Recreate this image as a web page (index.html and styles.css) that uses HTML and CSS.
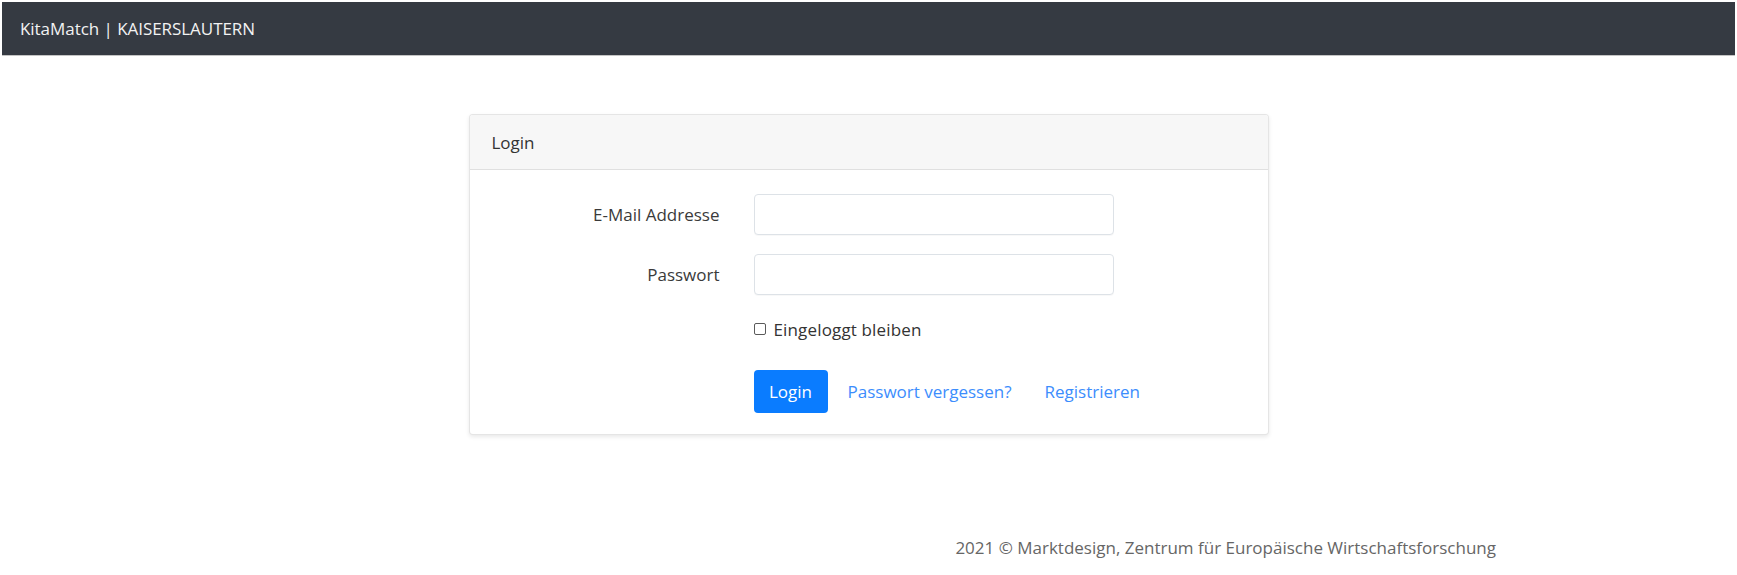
FILE: index.html
```html
<!DOCTYPE html>
<html lang="de">
<head>
<meta charset="utf-8">
<title>KitaMatch | KAISERSLAUTERN</title>
<link rel="stylesheet" href="styles.css">
</head>
<body>
  <nav class="navbar">
    <span class="brand">KitaMatch | KAISERSLAUTERN</span>
  </nav>
  <main class="main">
    <section class="card">
      <div class="card-header">Login</div>
      <form class="card-body">
        <div class="form-row row-email">
          <label class="form-label" for="email">E-Mail Addresse</label>
          <input class="form-input" id="email" type="email">
        </div>
        <div class="form-row row-password">
          <label class="form-label" for="password">Passwort</label>
          <input class="form-input" id="password" type="password">
        </div>
        <div class="form-row row-remember">
          <span></span>
          <label class="check"><input class="check-box" type="checkbox"> Eingeloggt bleiben</label>
        </div>
        <div class="form-row row-actions">
          <span></span>
          <div class="actions">
            <button class="btn-primary" type="button">Login</button>
            <a class="link link-forgot" href="#">Passwort vergessen?</a>
            <a class="link link-register" href="#">Registrieren</a>
          </div>
        </div>
      </form>
    </section>
  </main>
  <footer class="footer">
    <span class="footer-text">2021 © Marktdesign, Zentrum für Europäische Wirtschaftsforschung</span>
  </footer>
</body>
</html>
```
FILE: styles.css
```css
html, body {
  background: #ffffff;
}
body {
  margin: 0;
  padding: 2px 2px 0 2px;
  font-family: "Open Sans", "Noto Sans", "Liberation Sans", sans-serif;
  font-size: 17px;
  color: #212529;
}
.navbar {
  height: 53px;
  background: #353a42;
  display: flex;
  align-items: center;
  padding-left: 18px;
  box-shadow: 0 1px 0 #c4c4c4;
}
.brand {
  color: #f2f2f2;
  font-size: 17px;
  letter-spacing: -0.05px;
}
.main {
  padding-top: 59px;
}
.card {
  width: 798px;
  margin: 0 auto;
  border: 1px solid rgba(0, 0, 0, 0.1);
  border-radius: 4px;
  box-shadow: 0 2px 4px rgba(0, 0, 0, 0.09);
  background: #fff;
  overflow: hidden;
}
.card-header {
  height: 55px;
  box-sizing: border-box;
  padding: 0 22px;
  display: flex;
  align-items: center;
  background: #f7f7f7;
  border-bottom: 1px solid rgba(0, 0, 0, 0.09);
  color: #333;
}
.card-body {
  display: flex;
  flex-direction: column;
  padding: 24px 0 21px;
  margin: 0;
}
.form-row {
  display: grid;
  grid-template-columns: 250px 360px;
  column-gap: 34px;
  align-items: center;
}
.row-password { margin-top: 19px; }
.row-remember { margin-top: 21px; }
.row-actions { margin-top: 28px; }
.form-label {
  text-align: right;
  color: #3a3a3a;
}
.form-input {
  height: 41px;
  box-sizing: border-box;
  border: 1px solid #dde2e7;
  border-radius: 4px;
  margin: 0;
  padding: 0 12px;
  font: inherit;
  box-shadow: 0 1px 1px rgba(0, 0, 0, 0.03);
}
.check {
  display: flex;
  align-items: center;
  height: 26px;
  color: #333;
  letter-spacing: 0.15px;
}
.check-box {
  appearance: none;
  -webkit-appearance: none;
  width: 12px;
  height: 12px;
  box-sizing: border-box;
  border: 1px solid #5a5a5a;
  border-radius: 2px;
  margin: 0 8px 0 0;
  background: #fff;
  flex-shrink: 0;
}
.actions {
  display: flex;
  align-items: center;
  white-space: nowrap;
}
.actions > * {
  flex-shrink: 0;
}
.btn-primary {
  width: 74px;
  height: 43px;
  border: none;
  border-radius: 4px;
  background: #0a7cff;
  color: #fff;
  font: inherit;
  padding: 0;
}
.link {
  color: #3c8dfd;
  text-decoration: none;
}
.link-forgot { margin-left: 20px; }
.link-register { margin-left: 33px; }
.footer {
  display: flex;
  justify-content: flex-end;
  padding: 101px 239px 0 0;
}
.footer-text {
  color: #666;
}
```
